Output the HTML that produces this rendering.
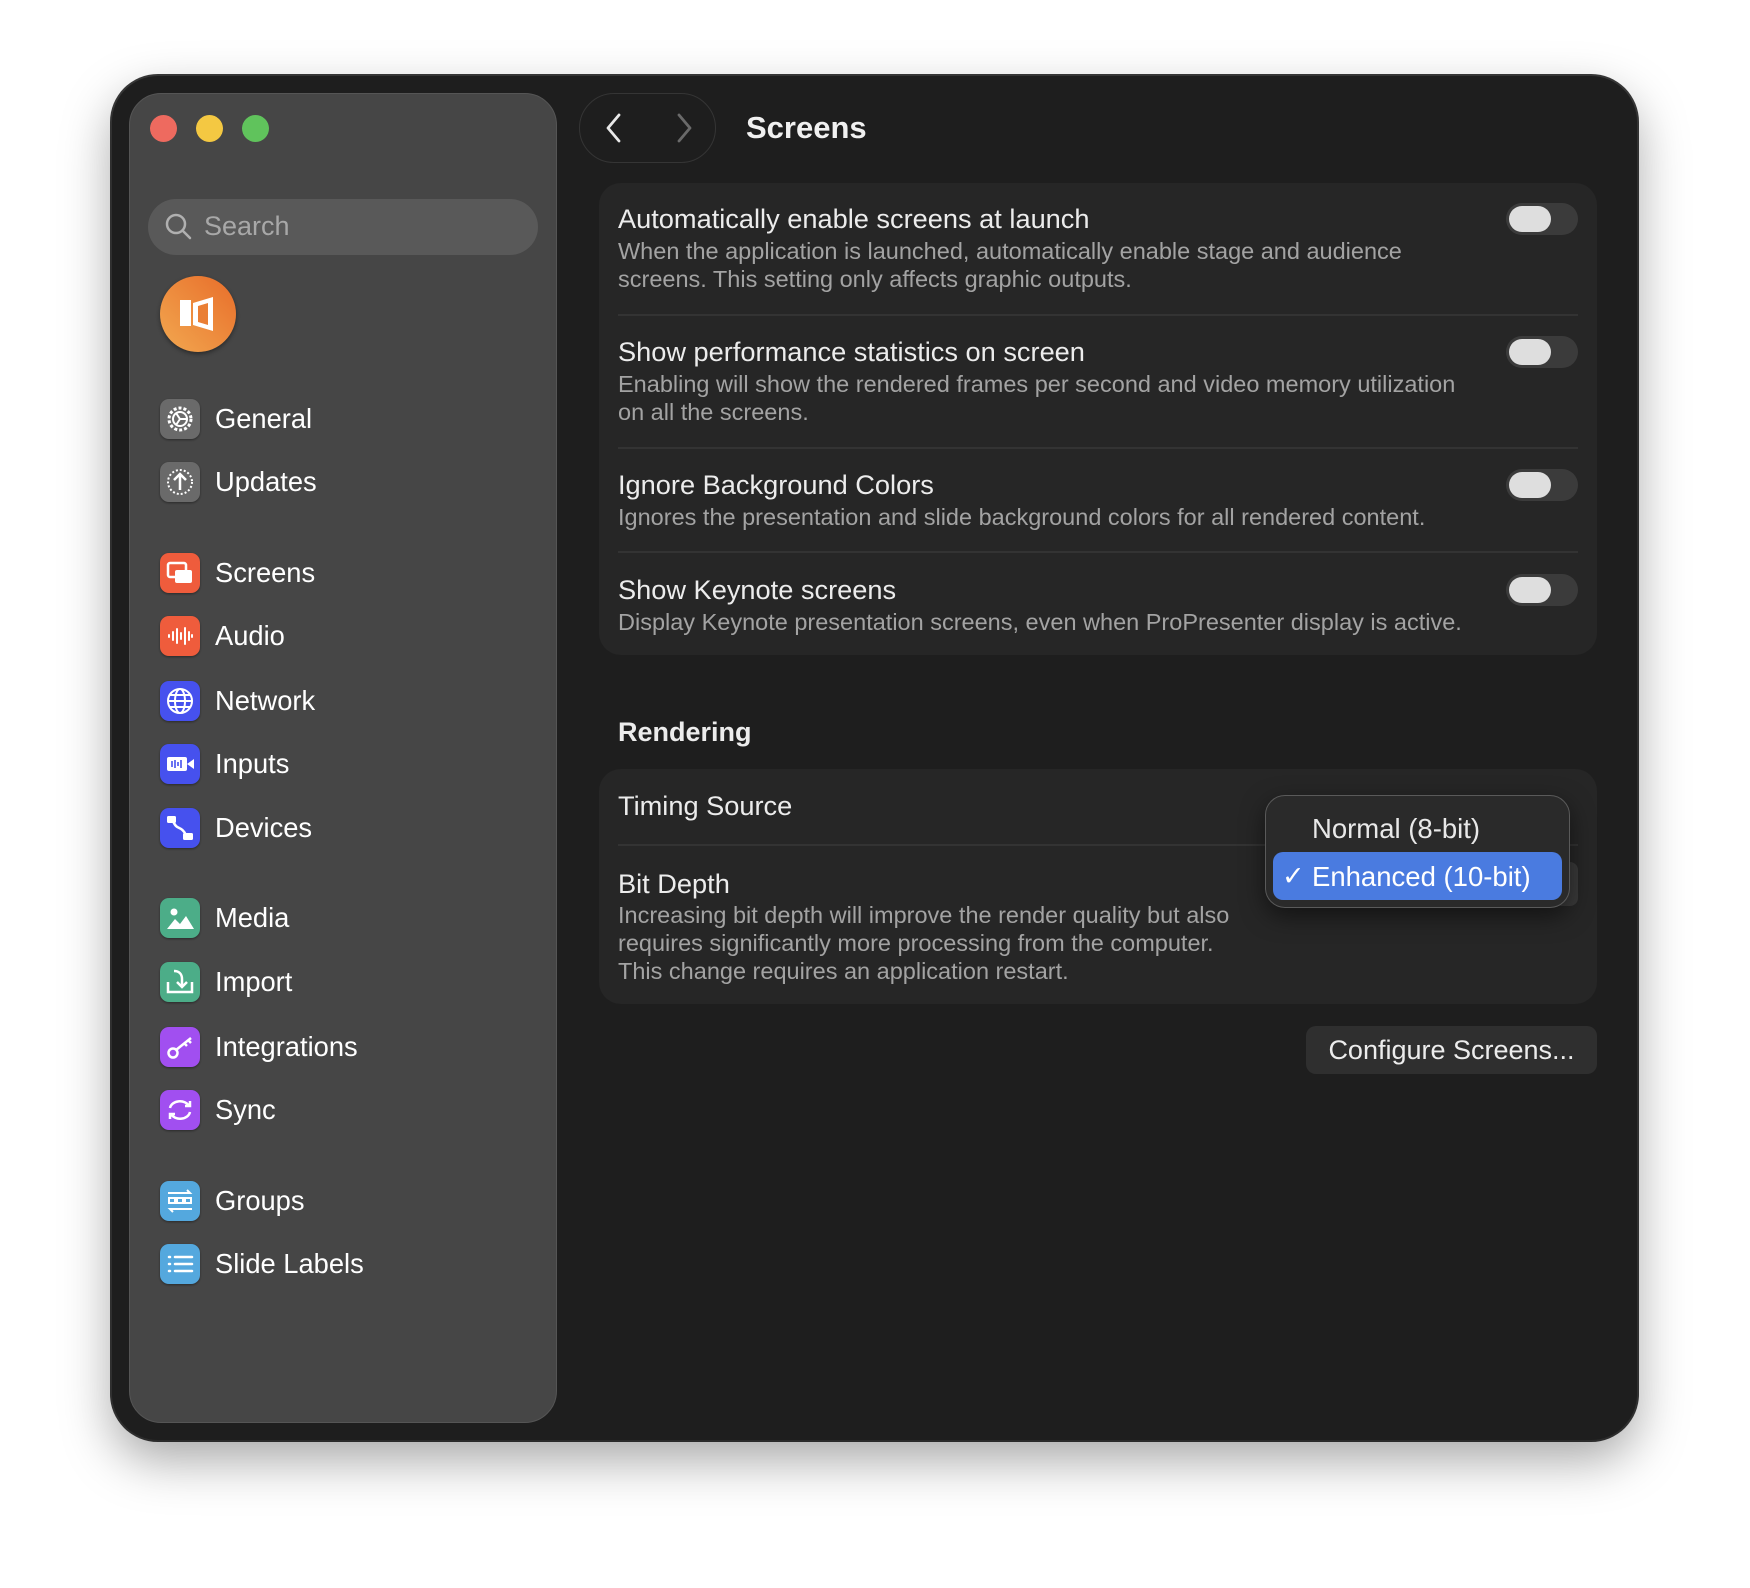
<!DOCTYPE html>
<html><head><meta charset="utf-8"><style>
*{margin:0;padding:0;box-sizing:border-box}
body{width:1750px;height:1588px;background:#fff;font-family:"Liberation Sans",sans-serif;position:relative;overflow:hidden}
.abs{position:absolute}
.win{left:112px;top:76px;width:1525px;height:1364px;background:#1e1e1e;border-radius:46px;box-shadow:0 20px 50px rgba(0,0,0,.35),0 0 0 2px #3a3a3a;}
.side{left:129px;top:93px;width:428px;height:1330px;background:#464646;border-radius:32px;border:1px solid #555}
.tl{width:27px;height:27px;border-radius:50%;top:115px}
.item{left:160px;width:420px;height:40px;display:flex;align-items:center}
.ic{width:40px;height:40px;border-radius:9px;display:flex;align-items:center;justify-content:center;box-shadow:0 1px 2px rgba(0,0,0,.4)}
.item span{margin-left:15px;color:#fff;font-size:27.3px}
.card{left:599px;width:998px;background:#262626;border-radius:22px}
.t{color:#ececec;font-size:27.2px;left:618px;position:absolute;white-space:nowrap}
.d{color:#a3a3a3;font-size:23.5px;left:618px;position:absolute;line-height:28px;white-space:nowrap}
.sep{left:618px;width:960px;height:2px;background:#333}
.tog{left:1506px;width:72px;height:32px;border-radius:16px;background:#3b3b3b}
.tog::after{content:"";position:absolute;left:3px;top:3px;width:42px;height:26px;border-radius:13px;background:#dedede}
</style></head><body>
<div class="abs win"></div>
<div class="abs side"></div>
<div class="abs tl" style="left:150px;background:#ee6a5f"></div>
<div class="abs tl" style="left:196px;background:#f4c842"></div>
<div class="abs tl" style="left:242px;background:#60c35c"></div>
<div class="abs" style="left:148px;top:199px;width:390px;height:56px;border-radius:28px;background:#595959"></div>
<svg class="abs" style="left:164px;top:212px" width="30" height="30" viewBox="0 0 30 30"><circle cx="12" cy="12" r="9" fill="none" stroke="#b0b0b0" stroke-width="2.5"/><line x1="18.5" y1="18.5" x2="26" y2="26" stroke="#b0b0b0" stroke-width="2.5" stroke-linecap="round"/></svg>
<div class="abs" style="left:204px;top:211px;color:#a8a8a8;font-size:27px">Search</div>
<div class="abs" style="left:160px;top:276px;width:76px;height:76px;border-radius:50%;background:linear-gradient(225deg,#e86d2a,#f2a850);box-shadow:0 2px 4px rgba(0,0,0,.4)"></div>
<svg class="abs" style="left:178px;top:296px" width="40" height="36" viewBox="0 0 40 36"><path d="M2 4h11v26H2z M15 7l20-6v34l-20-6z" fill="#fff"/><path d="M20 10l10-3v22l-10-3z" fill="#ea7f35"/></svg>

<div class="abs item" style="top:399px"><div class="ic" style="background:#6a6a6a"><svg width="32" height="32" viewBox="0 0 32 32"><circle cx="16" cy="16" r="11" fill="none" stroke="#fff" stroke-width="3" stroke-dasharray="3 2"/><circle cx="16" cy="16" r="7" fill="none" stroke="#fff" stroke-width="2"/><path d="M16 16l-4-6M16 16l7 0M16 16l-4 6" stroke="#fff" stroke-width="2"/></svg></div><span>General</span></div>
<div class="abs item" style="top:462px"><div class="ic" style="background:#6a6a6a"><svg width="32" height="32" viewBox="0 0 32 32"><circle cx="16" cy="16" r="12" fill="none" stroke="#fff" stroke-width="2" stroke-dasharray="2 2"/><path d="M16 24V9M10 14l6-6 6 6" fill="none" stroke="#fff" stroke-width="2.5"/></svg></div><span>Updates</span></div>
<div class="abs item" style="top:553px"><div class="ic" style="background:#ef5c3c"><svg width="32" height="32" viewBox="0 0 32 32"><rect x="4" y="6" width="18" height="14" rx="2" fill="none" stroke="#fff" stroke-width="2.5"/><rect x="11" y="13" width="17" height="13" rx="2" fill="#fff"/></svg></div><span>Screens</span></div>
<div class="abs item" style="top:616px"><div class="ic" style="background:#ef5c3c"><svg width="32" height="32" viewBox="0 0 32 32" stroke="#fff" stroke-width="2" stroke-linecap="round"><path d="M5 15v2M9 12v8M13 9v14M17 13v6M21 8v16M25 12v8M28 15v2"/></svg></div><span>Audio</span></div>
<div class="abs item" style="top:681px"><div class="ic" style="background:#4651ee"><svg width="32" height="32" viewBox="0 0 32 32" fill="none" stroke="#fff" stroke-width="2"><circle cx="16" cy="16" r="12"/><ellipse cx="16" cy="16" rx="5" ry="12"/><path d="M4 16h24M6 10h20M6 22h20"/></svg></div><span>Network</span></div>
<div class="abs item" style="top:744px"><div class="ic" style="background:#4651ee"><svg width="32" height="32" viewBox="0 0 32 32"><rect x="3" y="9" width="20" height="14" rx="2" fill="#fff"/><path d="M23 16l7-5v10z" fill="#fff"/><path d="M8 13v6M11 12v8M14 14v4M17 12v8" stroke="#4651ee" stroke-width="1.6"/></svg></div><span>Inputs</span></div>
<div class="abs item" style="top:808px"><div class="ic" style="background:#4651ee"><svg width="32" height="32" viewBox="0 0 32 32"><rect x="3" y="4" width="9" height="7" rx="1.5" fill="#fff"/><rect x="19" y="21" width="10" height="7" rx="1.5" fill="#fff"/><path d="M9 9c4 10 8 4 13 14" fill="none" stroke="#fff" stroke-width="2.5"/></svg></div><span>Devices</span></div>
<div class="abs item" style="top:898px"><div class="ic" style="background:#4cad88"><svg width="32" height="32" viewBox="0 0 32 32"><circle cx="10" cy="10" r="3.5" fill="#fff"/><path d="M3 27l8-10 5 5 6-8 8 13z" fill="#fff"/></svg></div><span>Media</span></div>
<div class="abs item" style="top:962px"><div class="ic" style="background:#4cad88"><svg width="32" height="32" viewBox="0 0 32 32" fill="none" stroke="#fff" stroke-width="2.5"><path d="M4 16v10h24V16M10 5c5 0 8 3 8 8v7M13 16l5 5 5-5"/></svg></div><span>Import</span></div>
<div class="abs item" style="top:1027px"><div class="ic" style="background:#a14ff0"><svg width="32" height="32" viewBox="0 0 32 32" fill="none" stroke="#fff" stroke-width="2.5"><circle cx="9" cy="22" r="4.5"/><path d="M12 19L27 7M20 12l3 3M24 9l3 3"/></svg></div><span>Integrations</span></div>
<div class="abs item" style="top:1090px"><div class="ic" style="background:#a14ff0"><svg width="32" height="32" viewBox="0 0 32 32" fill="none" stroke="#fff" stroke-width="2.5"><path d="M6 14a10 8 0 0 1 19-2M26 18a10 8 0 0 1-19 2M21 12h5V7M11 20H6v5"/></svg></div><span>Sync</span></div>
<div class="abs item" style="top:1181px"><div class="ic" style="background:#54a8de"><svg width="32" height="32" viewBox="0 0 32 32" fill="none" stroke="#fff" stroke-width="2"><path d="M4 8h22l-3-3M28 24H6l3 3"/><rect x="5" y="13" width="6" height="5"/><rect x="13" y="13" width="6" height="5"/><rect x="21" y="13" width="6" height="5"/></svg></div><span>Groups</span></div>
<div class="abs item" style="top:1244px"><div class="ic" style="background:#54a8de"><svg width="32" height="32" viewBox="0 0 32 32" stroke="#fff" stroke-width="2.5" stroke-linecap="round"><path d="M5 9h1M5 16h1M5 23h1M11 9h17M11 16h17M11 23h17"/></svg></div><span>Slide Labels</span></div>

<div class="abs" style="left:579px;top:93px;width:137px;height:70px;border-radius:35px;border:1.5px solid #353535;background:#1e1e1e"></div>
<svg class="abs" style="left:600px;top:110px" width="100" height="36" viewBox="0 0 100 36" fill="none" stroke-width="2.8" stroke-linecap="round" stroke-linejoin="round"><path d="M19 5L8 18l11 13" stroke="#e8e8e8"/><path d="M79 5l11 13-11 13" stroke="#6a6a6a"/></svg>
<div class="abs" style="left:746px;top:110px;color:#f0f0f0;font-size:31px;font-weight:bold">Screens</div>

<div class="abs card" style="top:183px;height:472px"></div>
<div class="t" style="top:203px">Automatically enable screens at launch</div>
<div class="d" style="top:237px">When the application is launched, automatically enable stage and audience<br>screens. This setting only affects graphic outputs.</div>
<div class="abs sep" style="top:314px"></div>
<div class="abs tog" style="top:203px"></div>
<div class="t" style="top:336px">Show performance statistics on screen</div>
<div class="d" style="top:370px">Enabling will show the rendered frames per second and video memory utilization<br>on all the screens.</div>
<div class="abs sep" style="top:447px"></div>
<div class="abs tog" style="top:336px"></div>
<div class="t" style="top:469px">Ignore Background Colors</div>
<div class="d" style="top:503px">Ignores the presentation and slide background colors for all rendered content.</div>
<div class="abs sep" style="top:551px"></div>
<div class="abs tog" style="top:469px"></div>
<div class="t" style="top:574px">Show Keynote screens</div>
<div class="d" style="top:608px">Display Keynote presentation screens, even when ProPresenter display is active.</div>
<div class="abs tog" style="top:574px"></div>

<div class="abs" style="left:618px;top:717px;color:#ececec;font-size:27px;font-weight:bold">Rendering</div>
<div class="abs card" style="top:769px;height:235px"></div>
<div class="t" style="top:790px">Timing Source</div>
<div class="abs sep" style="top:844px"></div>
<div class="t" style="top:868px">Bit Depth</div>
<div class="d" style="top:901px">Increasing bit depth will improve the render quality but also<br>requires significantly more processing from the computer.<br>This change requires an application restart.</div>
<div class="abs" style="left:1540px;top:862px;width:38px;height:44px;border-radius:8px;background:#3a3a3a"></div>

<div class="abs" style="left:1265px;top:795px;width:305px;height:113px;border-radius:20px;background:#2a2a2a;border:1.5px solid #5a5a5a;box-shadow:0 8px 24px rgba(0,0,0,.5)"></div>
<div class="abs" style="left:1273px;top:852px;width:289px;height:48px;border-radius:10px;background:#4a7be0"></div>
<div class="abs" style="left:1312px;top:813px;color:#e8e8e8;font-size:27.5px">Normal (8-bit)</div>
<div class="abs" style="left:1282px;top:861px;color:#fff;font-size:27px">✓</div>
<div class="abs" style="left:1312px;top:861px;color:#fff;font-size:27.5px">Enhanced (10-bit)</div>

<div class="abs" style="left:1306px;top:1026px;width:291px;height:48px;border-radius:10px;background:#2f2f2f"></div>
<div class="abs" style="left:1306px;top:1035px;width:291px;text-align:center;color:#ececec;font-size:27px">Configure Screens...</div>
</body></html>
